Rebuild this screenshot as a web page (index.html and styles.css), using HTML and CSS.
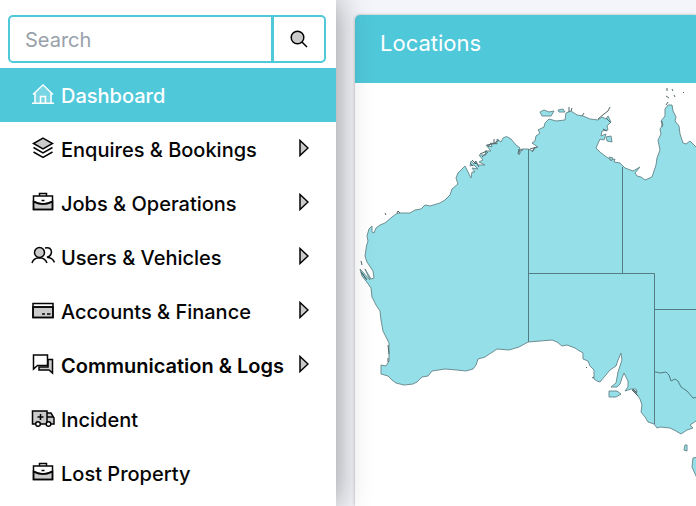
FILE: index.html
```
<!DOCTYPE html>
<html lang="en">
<head>
<meta charset="utf-8">
<title>Dashboard</title>
<link rel="stylesheet" href="styles.css">
</head>
<body>
<svg class="sprite" aria-hidden="true">
  <symbol id="case" viewBox="0 0 22 22">
    <path class="tone" d="M1.500 10.500q9.500 5 19 0v8h-19z"/>
    <path d="M1.500 5h19v13.500h-19zM7.500 5V2.500h7V5M1.500 10.500q9.500 5 19 0M9.500 9.500h3"/>
  </symbol>
  <symbol id="arrow" viewBox="0 0 10 18">
    <path class="tone" d="M1 1.500v15L9 9z"/>
  </symbol>
</svg>
<div class="layout">
  <aside class="sidebar">
    <form class="search" role="search">
      <input class="search-input" type="search" placeholder="Search" aria-label="Search">
      <button class="search-button" type="button" aria-label="Submit search">
        <svg class="search-icon" viewBox="0 0 18 18"><circle class="tone" cx="7.500" cy="7.500" r="6.300"/><path d="M12 12l5 5"/></svg>
      </button>
    </form>
    <nav>
      <ul class="menu">
        <li><a class="item active" href="#">
          <svg class="icon" viewBox="0 0 22 22"><path class="soft" d="M3 10.500 11 3l8 7.500V20H3z"/><path d="M0 20.300h22M3 20V10M19 20V10M1 11.500 11 2l10 9.500M8.500 20v-6.500h5V20"/></svg>
          <span>Dashboard</span></a></li>
        <li><a class="item" href="#">
          <svg class="icon" viewBox="0 0 22 22"><path class="tone" d="M11 1.200 20.500 6.500 11 12 1.500 6.500z"/><path d="M1.500 10.500 11 16l9.500-5.500M1.500 15 11 20.500 20.500 15"/></svg>
          <span>Enquires &amp; Bookings</span><svg class="arrow"><use href="#arrow"/></svg></a></li>
        <li><a class="item" href="#">
          <svg class="icon"><use href="#case"/></svg>
          <span>Jobs &amp; Operations</span><svg class="arrow"><use href="#arrow"/></svg></a></li>
        <li><a class="item" href="#">
          <svg class="icon wide" viewBox="0 0 24 22"><circle class="tone" cx="8.500" cy="7.500" r="5"/><path d="M1 18q1.500-5 7.500-5.200 5.500.2 7.500 5.200M14 3q6-1.500 6.500 4 0 4-4.500 5.300 5.500.3 7.500 5.200"/></svg>
          <span>Users &amp; Vehicles</span><svg class="arrow"><use href="#arrow"/></svg></a></li>
        <li><a class="item" href="#">
          <svg class="icon" viewBox="0 0 22 22"><path class="tone" d="M1 8h20v10.500H1z"/><path d="M1 4.500h20v14H1zM1 8h20M10 15h3M15 15h3.500"/></svg>
          <span>Accounts &amp; Finance</span><svg class="arrow"><use href="#arrow"/></svg></a></li>
        <li><a class="item strong" href="#">
          <svg class="icon" viewBox="0 0 22 22"><path class="tone" d="M16 6.500h4.500V20L17 17H7v-3h9z"/><path d="M1.500 2h14v10.500H5.500l-4 3.500z"/></svg>
          <span>Communication &amp; Logs</span><svg class="arrow"><use href="#arrow"/></svg></a></li>
        <li><a class="item" href="#">
          <svg class="icon wide" viewBox="0 0 24 22"><path class="tone" d="M1.500 4H16v13H1.500zM16 6h4l3 5v6h-7z"/><path d="M9.500 7v6M6.500 10h6M16 10h6"/><circle class="wheel" cx="7" cy="17" r="2.300"/><circle class="wheel" cx="17.500" cy="17" r="2.300"/></svg>
          <span>Incident</span></a></li>
        <li><a class="item" href="#">
          <svg class="icon"><use href="#case"/></svg>
          <span>Lost Property</span></a></li>
      </ul>
    </nav>
  </aside>
  <main class="content">
    <section class="card">
      <h1 class="card-title">Locations</h1>
      <svg class="map" viewBox="355 83 341 423" preserveAspectRatio="xMinYMin slice" role="img" aria-label="Map of Australia">
        <path class="land" d="M366.500 246 368 241 367 236 369 229 372 226 372 232 374 233 376 228 380 225 385 223 392 217 396 214 399 213 410 213 415 210 421 209 425 205 430 206 440 203 445 200 450 195 452 189 458 184 456 178 458 173 465 166 471 178 472 172 475 172 472 168 478 169 474 165 470 166 471 161 474 164 476 161 478 165 485 165 479 162 483 160 479 155 486 155 485 151 491 151 486 145 492 147 491 143 497 144 497 139 501 142 503 138 506.500 136.500 511 139 516 145 520 148 519 155 522 149 528 149 533 151 534 148 538 147 532 143 535 141 536 136 540 133 538 130 544 127 545 123 549 119 556 121 565 120 566 113 571 111 577 115 583 116 590 119 598 120 602 117 606 119 608 116 611 122 607 126 608 130 602 131 601 136 606 134 604 140 600 139 596 148 600 152 605 156 611 160 615 159 614 162 620 163 625 168 633 171 640 167 635 173 637 176 641 177 645 180 652 177 654 171 656 165 657 158 660 150 658 140 661 134 660 129 663 125 661 121 665 116 665 109 668 105 672 105 673 111 676 117 675 121 679 126 680 134 683 143 686 144 690 141 696 147 720 165V410L696 421 690 425 693 428 687 430 681 434 676 431 670 428 660 427 657 428 654 424 648 422 645 417 641 412 642 405 640 399 636 393 632 389 637 392 636 389 631 389 625 391 628 387 628 381 624 373 622 378 620 384 617 387 611 387 616 383 618 372 620 366 622 360 621 353 618 360 616 366 610 370 605 376 600 382 597 381 594 379 594 370 590 366 588 361 583 359 583 353 578 350 575 348 567 345 562 346 557 342 552 340 540 341 528 342 519 347 509 350 497 349 491 353 485 357 478 359 476 365 473 369 466 371 457 370 445 369 432 371 428 376 422 377 417 382 413 384 404 385 396 383 392 380 388 376 381 374 381 365 386 366 389 361 389 343 383 331 381 320 380 311 376 305 372 297 371 288 366 281 362 276 360 269 370 280 365 269 371 279 374 278 373 271 367 262 365 256z"/>
        <path class="land" d="M540 112 544 110 549 112 554 111 551 116 542 116zM558 110 563 109 565 112 559 112zM606 137 611 136 612 142 607 141zM609 157 613 158 611 161zM609 391 617 391 621 394 616 397 609 397zM685 445 687 445 687 451 684 450zM698 457 693 458 692 467 697 478z"/>
        <path class="border" d="M528.500 149V342M528 273.500H654.500M622.500 167V273.500M654.500 273.500V424M654 309.500H720M654 371.500 660 373 666 372 669 375 671 381 675 379 678 381 681 387 687 391 693 398 700 397"/>
        <path class="shore" d="M361 261 362 265M385 213 386 215M397 213 398 211 400 213M598 119 604 114 608 111 610 107M667 88 667 91M666 96 669 98M668 102 666 105M672 89 673 91M674 95 675 97M683 92 684 93M388 345 389 354M388 358 388 362M586 367 587 368M594 377 592 378M569 107 569 112M571 111 572 108M582 116 584 113M470 163 473 166M475 161 479 167M472 160 476 164M480 154 487 151M482 157 488 152M488 147 491 143M487 145 497 143M493 144 499 140M494 139 494 143M519 149 518 154M519 150 523 150M530 149 537 147M532 152 535 148M603 129 607 131M606 118 611 123M662 121 662 127M632 390 638 396M633 389 637 393M362 273 367 280M361 272 366 279"/>
      </svg>
    </section>
  </main>
</div>
</body>
</html>
```
FILE: styles.css
```
* { box-sizing: border-box; }
body {
  margin: 0;
  font-family: Inter, "Liberation Sans", sans-serif;
  font-size: 20px;
  color: #050505;
  background: #f3f5fa;
}
.sprite { display: none; }
.layout {
  display: flex;
  min-height: 100vh;
  overflow: hidden;
}
.sidebar {
  position: relative;
  flex: none;
  width: 336px;
  background: #fff;
  box-shadow: 0 0 32px rgba(0, 0, 0, 0.42);
}
.search {
  display: flex;
  height: 48px;
  margin: 15px 10px 5px 8px;
  border: 2px solid #4fc8da;
  border-radius: 5px;
}
.search-input {
  flex: 1;
  min-width: 0;
  padding: 2px 15px 0;
  border: 0;
  background: transparent;
  font: inherit;
  outline: 0;
}
.search-input::placeholder { color: #98a1a9; opacity: 1; }
.search-button {
  display: grid;
  place-items: center;
  width: 53px;
  padding: 0;
  border: 0;
  border-left: 3px solid #4fc8da;
  background: transparent;
}
svg {
  fill: none;
  stroke: currentColor;
  stroke-width: 1.5;
}
.search-icon { width: 18px; height: 18px; }
.tone { fill: #cbcbcb; }
.soft { fill: #78d5e3; stroke: none; }
.wheel { fill: #fff; }
.menu { margin: 0; padding: 0; list-style: none; }
.item {
  display: flex;
  align-items: center;
  height: 54px;
  padding: 2px 27px 0 32px;
  color: inherit;
  font-weight: 500;
  text-decoration: none;
  white-space: nowrap;
}
.active { background: #4fc8da; color: #fff; }
.strong { font-weight: 600; }
.icon {
  flex: none;
  width: 22px;
  height: 22px;
  margin: 0 7px 4px 0;
}
.wide { width: 24px; margin-left: -1px; margin-right: 6px; }
.arrow {
  flex: none;
  width: 10px;
  height: 18px;
  margin: 0 0 4px auto;
}
.content {
  flex: 1;
  min-width: 0;
  padding: 15px 0 0 19px;
}
.card {
  min-height: 100%;
  border-radius: 5px 0 0 0;
  background: #fff;
  box-shadow: 0 0 3px rgba(0, 0, 0, 0.3);
}
.card-title {
  margin: 0;
  padding: 13px 25px 25px;
  border-radius: 5px 0 0 0;
  background: #4fc8da;
  color: #fff;
  font-size: 22px;
  font-weight: 400;
  line-height: 30px;
}
.map { display: block; width: 100%; }
.land { fill: #94dfe8; stroke: #6d8f93; stroke-width: 1; }
.border { stroke: #557c82; stroke-width: 1; }
.shore { stroke: #52666a; stroke-width: 1; }
```
